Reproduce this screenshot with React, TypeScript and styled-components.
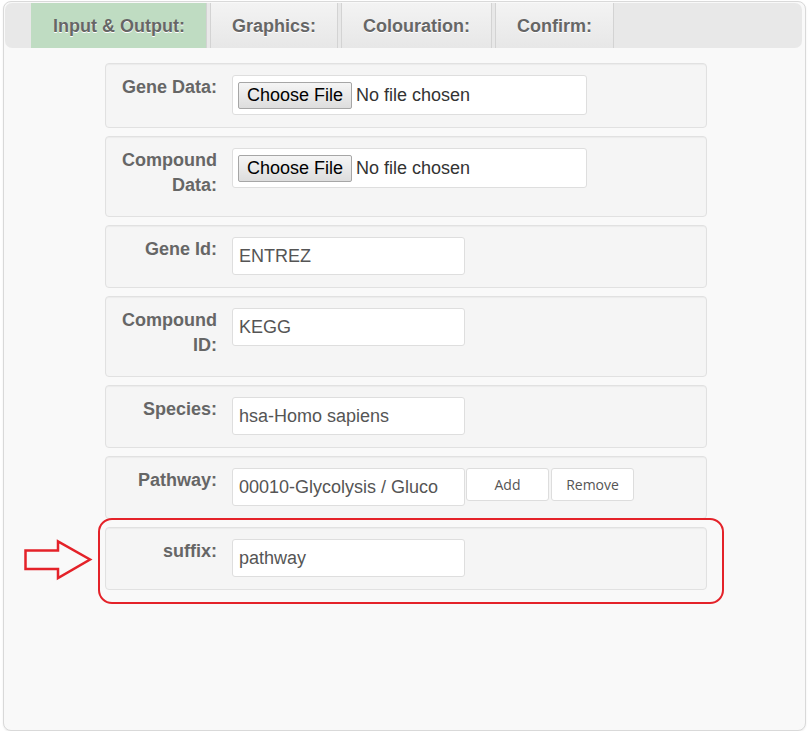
import React from 'react'
import styled, { createGlobalStyle } from 'styled-components'

const GlobalStyle = createGlobalStyle`
    html, body {
        margin: 0;
        padding: 0;
        background: #ffffff;
        font-family: "Liberation Sans", Arial, sans-serif;
    }
`

const tabs = ['Input & Output:', 'Graphics:', 'Colouration:', 'Confirm:']

function App() {
    return (
        <>
            <GlobalStyle />
            <Panel>
                <TabBar>
                    {tabs.map((tab, i) => (
                        <Tab key={tab} $active={i === 0}>{tab}</Tab>
                    ))}
                </TabBar>

                <Form>
                    <Well>
                        <Label>Gene Data:</Label>
                        <FileBox>
                            <FileButton>Choose File</FileButton>
                            <FileName>No file chosen</FileName>
                        </FileBox>
                    </Well>

                    <Well>
                        <Label>Compound Data:</Label>
                        <FileBox>
                            <FileButton>Choose File</FileButton>
                            <FileName>No file chosen</FileName>
                        </FileBox>
                    </Well>

                    <Well>
                        <Label>Gene Id:</Label>
                        <TextInput readOnly value="ENTREZ" />
                    </Well>

                    <Well>
                        <Label>Compound ID:</Label>
                        <TextInput readOnly value="KEGG" />
                    </Well>

                    <Well>
                        <Label>Species:</Label>
                        <TextInput readOnly value="hsa-Homo sapiens" />
                    </Well>

                    <Well>
                        <Label>Pathway:</Label>
                        <TextInput readOnly value="00010-Glycolysis / Gluco" />
                        <SmallButton type="button" $gap={1}>Add</SmallButton>
                        <SmallButton type="button" $gap={2}>Remove</SmallButton>
                    </Well>

                    {/* highlighted row, ring + arrow drawn over it */}
                    <Callout>
                        <Arrow width="72" height="44" viewBox="0 0 72 44">
                            <polygon
                                points="3.5,12.5 36,12.5 36,3.5 68,21.5 36,40 36,31 3.5,31"
                                fill="none"
                                stroke="#e42229"
                                strokeWidth="2.5"
                            />
                        </Arrow>
                        <Well $last>
                            <Label>suffix:</Label>
                            <TextInput readOnly value="pathway" />
                        </Well>
                    </Callout>
                </Form>
            </Panel>
        </>
    )
}

export default App

const Panel = styled.div`
    box-sizing: border-box;
    width: 803px;
    height: 730px;
    margin: 1px 0 0 3px;
    padding: 1px 3px 0 1px;
    border: 1px solid #d9d9d9;
    border-radius: 8px;
    background-color: #f9f9f9;
    box-shadow: 0 1px 2px rgba(0, 0, 0, 0.08);
`
const TabBar = styled.div`
    display: flex;
    align-items: stretch;
    height: 45px;
    padding-left: 26px;
    background-color: #e8e8e8;
    border-radius: 7px;
`
const Tab = styled.div<{ $active?: boolean }>`
    display: flex;
    align-items: center;
    padding: 1px 21px 0;
    margin-right: 3px;
    border-left: 1px solid ${p => (p.$active ? '#bfdcc2' : '#d3d3d3')};
    border-right: 1px solid #d3d3d3;
    background: ${p => (p.$active ? '#bfdcc2' : 'linear-gradient(#f3f3f3, #e7e7e7)')};
    font-size: 18px;
    font-weight: bold;
    color: #666;
    text-shadow: 0 1px 0 #ffffff;
    white-space: nowrap;
    cursor: pointer;
`
const Form = styled.div`
    width: 602px;
    margin: 15px 0 0 100px;
`
const Well = styled.div<{ $last?: boolean }>`
    box-sizing: border-box;
    display: flex;
    align-items: flex-start;
    padding: 11px 11px 12px;
    margin-bottom: ${p => (p.$last ? '0' : '8px')};
    background-color: #f5f5f5;
    border: 1px solid #e1e1e1;
    border-radius: 4px;
    box-shadow: inset 0 1px 1px rgba(0, 0, 0, 0.04);
`
const Label = styled.label`
    flex: none;
    width: 100px;
    margin: 0 15px 6px 0;
    text-align: right;
    font-size: 18px;
    font-weight: bold;
    line-height: 25px;
    color: #666;
`
const TextInput = styled.input`
    box-sizing: border-box;
    width: 233px;
    height: 38px;
    margin: 0;
    padding: 0 6px;
    border: 1px solid #dedede;
    border-radius: 3px;
    background-color: #ffffff;
    font-family: "Liberation Sans", Arial, sans-serif;
    font-size: 18px;
    color: #555;
    outline: none;
`
const FileBox = styled.div`
    box-sizing: border-box;
    display: flex;
    align-items: center;
    width: 355px;
    height: 40px;
    padding-left: 5px;
    border: 1px solid #dedede;
    border-radius: 3px;
    background-color: #ffffff;
`
const FileButton = styled.span`
    display: flex;
    align-items: center;
    height: 27px;
    box-sizing: border-box;
    padding: 0 8px;
    border: 1px solid #a6a6a6;
    border-radius: 2px;
    background: linear-gradient(#f5f5f5, #dddddd);
    font-size: 18px;
    color: #000;
`
const FileName = styled.span`
    margin-left: 4px;
    font-size: 18px;
    color: #333;
`
const SmallButton = styled.button<{ $gap: number }>`
    box-sizing: border-box;
    width: 83px;
    height: 33px;
    margin: 0 0 0 ${p => p.$gap}px;
    padding: 0;
    border: 1px solid #dddddd;
    border-radius: 3px;
    background-color: #ffffff;
    font-family: "Open Sans", sans-serif;
    font-size: 14px;
    color: #555;
`
const Callout = styled.div`
    position: relative;
    margin-top: 8px;

    &::after {
        content: '';
        position: absolute;
        left: -7px;
        right: -17px;
        top: -9px;
        bottom: -14px;
        border: 2.5px solid #e42229;
        border-radius: 14px;
        pointer-events: none;
    }
`
const Arrow = styled.svg`
    position: absolute;
    left: -83px;
    top: 11px;
`
